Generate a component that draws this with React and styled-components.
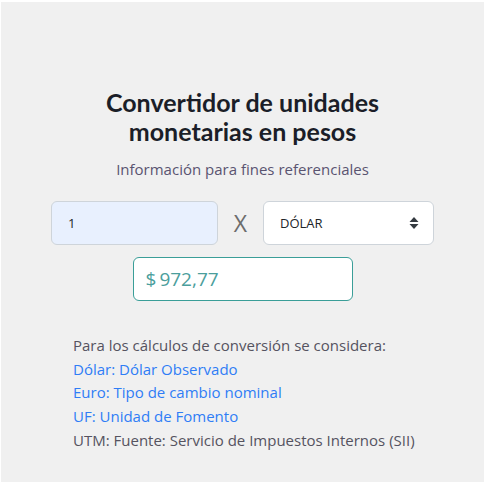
import React from 'react';
import styled, { createGlobalStyle } from 'styled-components';

const GlobalStyle = createGlobalStyle`
  body {
    margin: 0;
    background: #ffffff;
  }
`;

const Panel = styled.div`
  margin: 2px 1px 0 1px;
  width: 483px;
  height: 480px;
  box-sizing: border-box;
  background: #f0f0f0;
  display: flex;
  flex-direction: column;
  align-items: center;
  padding-top: 86px;
`;

const Title = styled.h1`
  margin: 0;
  font-family: Lato, 'Liberation Sans', sans-serif;
  font-weight: 700;
  font-size: 25px;
  line-height: 29px;
  color: #1b1e28;
  text-align: center;
`;

const Subtitle = styled.p`
  margin: 13px 0 0;
  font-family: 'Open Sans', 'Liberation Sans', sans-serif;
  font-size: 15px;
  line-height: 20px;
  color: #5a5470;
`;

const ConvertRow = styled.div`
  margin-top: 22px;
  display: grid;
  grid-template-columns: 167px 45px 171px;
  align-items: center;
`;

const Field = styled.div`
  height: 44px;
  box-sizing: border-box;
  border: 1px solid ${({ $border }) => $border || '#ced4da'};
  border-radius: 6px;
  background: ${({ $bg }) => $bg || '#ffffff'};
  display: flex;
  align-items: center;
  padding: 0 16px;
  font-family: 'Open Sans', 'Liberation Sans', sans-serif;
  font-size: 13px;
  color: #212529;
`;

const Times = styled.span`
  text-align: center;
  font-family: 'Open Sans', 'Liberation Sans', sans-serif;
  font-size: 23px;
  color: #6c6c6c;
`;

const SelectBox = styled(Field)`
  justify-content: space-between;
  padding-right: 14px;
`;

const Result = styled(Field)`
  margin-top: 12px;
  width: 220px;
  padding: 0 12px;
  font-size: 19px;
  color: #4b9e9c;
  gap: 3px;
`;

const Notes = styled.div`
  margin-top: 33px;
  align-self: flex-start;
  margin-left: 72px;
  font-family: 'Open Sans', 'Liberation Sans', sans-serif;
  font-size: 15px;
  line-height: 23.7px;
  color: #555360;
`;

const NoteLink = styled.div`
  color: #2f7df6;
`;

const SortIcon = () => (
  <svg width="10" height="14" viewBox="0 0 10 14">
    <path d="M5 1 L9.5 6 H0.5 Z" fill="#343a40" />
    <path d="M5 13 L9.5 8 H0.5 Z" fill="#343a40" />
  </svg>
);

export default function App() {
  return (
    <>
      <GlobalStyle />
      <Panel>
        <Title>
          Convertidor de unidades
          <br />
          monetarias en pesos
        </Title>
        <Subtitle>Información para fines referenciales</Subtitle>
        <ConvertRow>
          <Field $bg="#e8f0fe">1</Field>
          <Times>X</Times>
          <SelectBox>
            <span>DÓLAR</span>
            <SortIcon />
          </SelectBox>
        </ConvertRow>
        <Result $border="#3a9e98">
          <span>$</span>
          <span>972,77</span>
        </Result>
        <Notes>
          <div>Para los cálculos de conversión se considera:</div>
          <NoteLink>Dólar: Dólar Observado</NoteLink>
          <NoteLink>Euro: Tipo de cambio nominal</NoteLink>
          <NoteLink>UF: Unidad de Fomento</NoteLink>
          <div>UTM: Fuente: Servicio de Impuestos Internos (SII)</div>
        </Notes>
      </Panel>
    </>
  );
}
